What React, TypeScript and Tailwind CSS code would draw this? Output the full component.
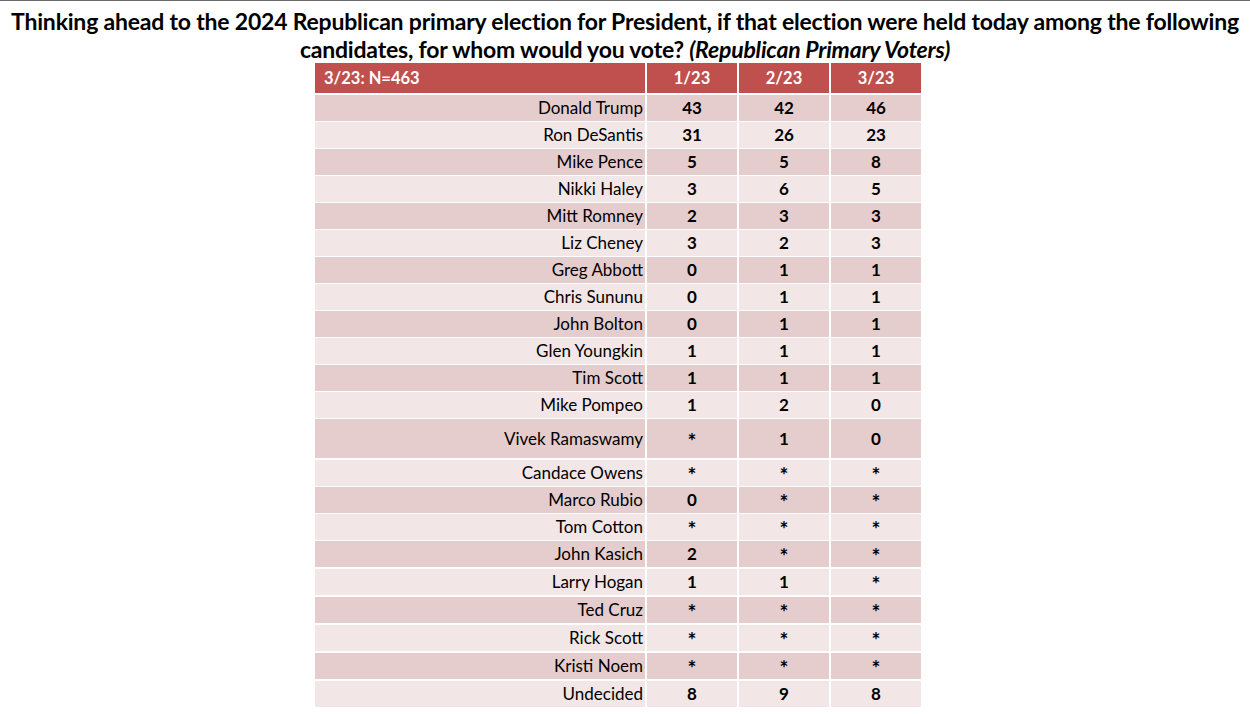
import React from "react";

type Row = { name: string; a: string; b: string; c: string; h: string };

const rows: Row[] = [
  { name: "Donald Trump", a: "43", b: "42", c: "46", h: "h-[25px]" },
  { name: "Ron DeSantis", a: "31", b: "26", c: "23", h: "h-[25px]" },
  { name: "Mike Pence", a: "5", b: "5", c: "8", h: "h-[25px]" },
  { name: "Nikki Haley", a: "3", b: "6", c: "5", h: "h-[25px]" },
  { name: "Mitt Romney", a: "2", b: "3", c: "3", h: "h-[25px]" },
  { name: "Liz Cheney", a: "3", b: "2", c: "3", h: "h-[25px]" },
  { name: "Greg Abbott", a: "0", b: "1", c: "1", h: "h-[25px]" },
  { name: "Chris Sununu", a: "0", b: "1", c: "1", h: "h-[25px]" },
  { name: "John Bolton", a: "0", b: "1", c: "1", h: "h-[25px]" },
  { name: "Glen Youngkin", a: "1", b: "1", c: "1", h: "h-[25px]" },
  { name: "Tim Scott", a: "1", b: "1", c: "1", h: "h-[25px]" },
  { name: "Mike Pompeo", a: "1", b: "2", c: "0", h: "h-[25px]" },
  { name: "Vivek Ramaswamy", a: "*", b: "1", c: "0", h: "h-[39px]" },
  { name: "Candace Owens", a: "*", b: "*", c: "*", h: "h-[25px]" },
  { name: "Marco Rubio", a: "0", b: "*", c: "*", h: "h-[25px]" },
  { name: "Tom Cotton", a: "*", b: "*", c: "*", h: "h-[25px]" },
  { name: "John Kasich", a: "2", b: "*", c: "*", h: "h-[26px]" },
  { name: "Larry Hogan", a: "1", b: "1", c: "*", h: "h-[26px]" },
  { name: "Ted Cruz", a: "*", b: "*", c: "*", h: "h-[26px]" },
  { name: "Rick Scott", a: "*", b: "*", c: "*", h: "h-[26px]" },
  { name: "Kristi Noem", a: "*", b: "*", c: "*", h: "h-[26px]" },
  { name: "Undecided", a: "8", b: "9", c: "8", h: "h-[26px]" },
];

function Val({ v, bg }: { v: string; bg: string }) {
  return (
    <div className={`${bg} flex items-center justify-center font-bold`}>
      {v === "*" ? <span className="text-[21px] leading-none pt-[3px]">*</span> : v}
    </div>
  );
}

export default function App() {
  return (
    <div className="w-[1250px] h-[714px] bg-white overflow-hidden font-['Lato',sans-serif] text-black">
      <div className="h-[1px] bg-[#6b6b6b]" />
      <div className="pt-[6px] text-center font-bold text-[23px] leading-[28px] tracking-[-0.2px] whitespace-nowrap">
        <div>
          Thinking ahead to the 2024 Republican primary election for President, if that election were held today among the following
        </div>
        <div>
          candidates, for whom would you vote? <span className="italic">(Republican Primary Voters)</span>
        </div>
      </div>
      <div className="ml-[315px] w-[606px] flex flex-col gap-y-[2px]">
        <div className="grid grid-cols-[330px_90px_90px_90px] gap-x-[2px] h-[30px] bg-[#C0504D] text-white font-bold text-[16.5px]">
          <div className="flex items-center pl-[9px]">3/23: N=463</div>
          <div className="flex items-center justify-center border-l-[2px] border-white -ml-[2px]">1/23</div>
          <div className="flex items-center justify-center border-l-[2px] border-white -ml-[2px]">2/23</div>
          <div className="flex items-center justify-center border-l-[2px] border-white -ml-[2px]">3/23</div>
        </div>
        {rows.map((r, i) => {
          const bg = i % 2 === 0 ? "bg-[#E6CDCD]" : "bg-[#F2E6E6]";
          return (
            <div key={r.name} className={`grid grid-cols-[330px_90px_90px_90px] gap-x-[2px] text-[17px] ${r.h}`}>
              <div className={`${bg} flex items-center justify-end pr-[2px]`}>{r.name}</div>
              <Val v={r.a} bg={bg} />
              <Val v={r.b} bg={bg} />
              <Val v={r.c} bg={bg} />
            </div>
          );
        })}
      </div>
    </div>
  );
}
